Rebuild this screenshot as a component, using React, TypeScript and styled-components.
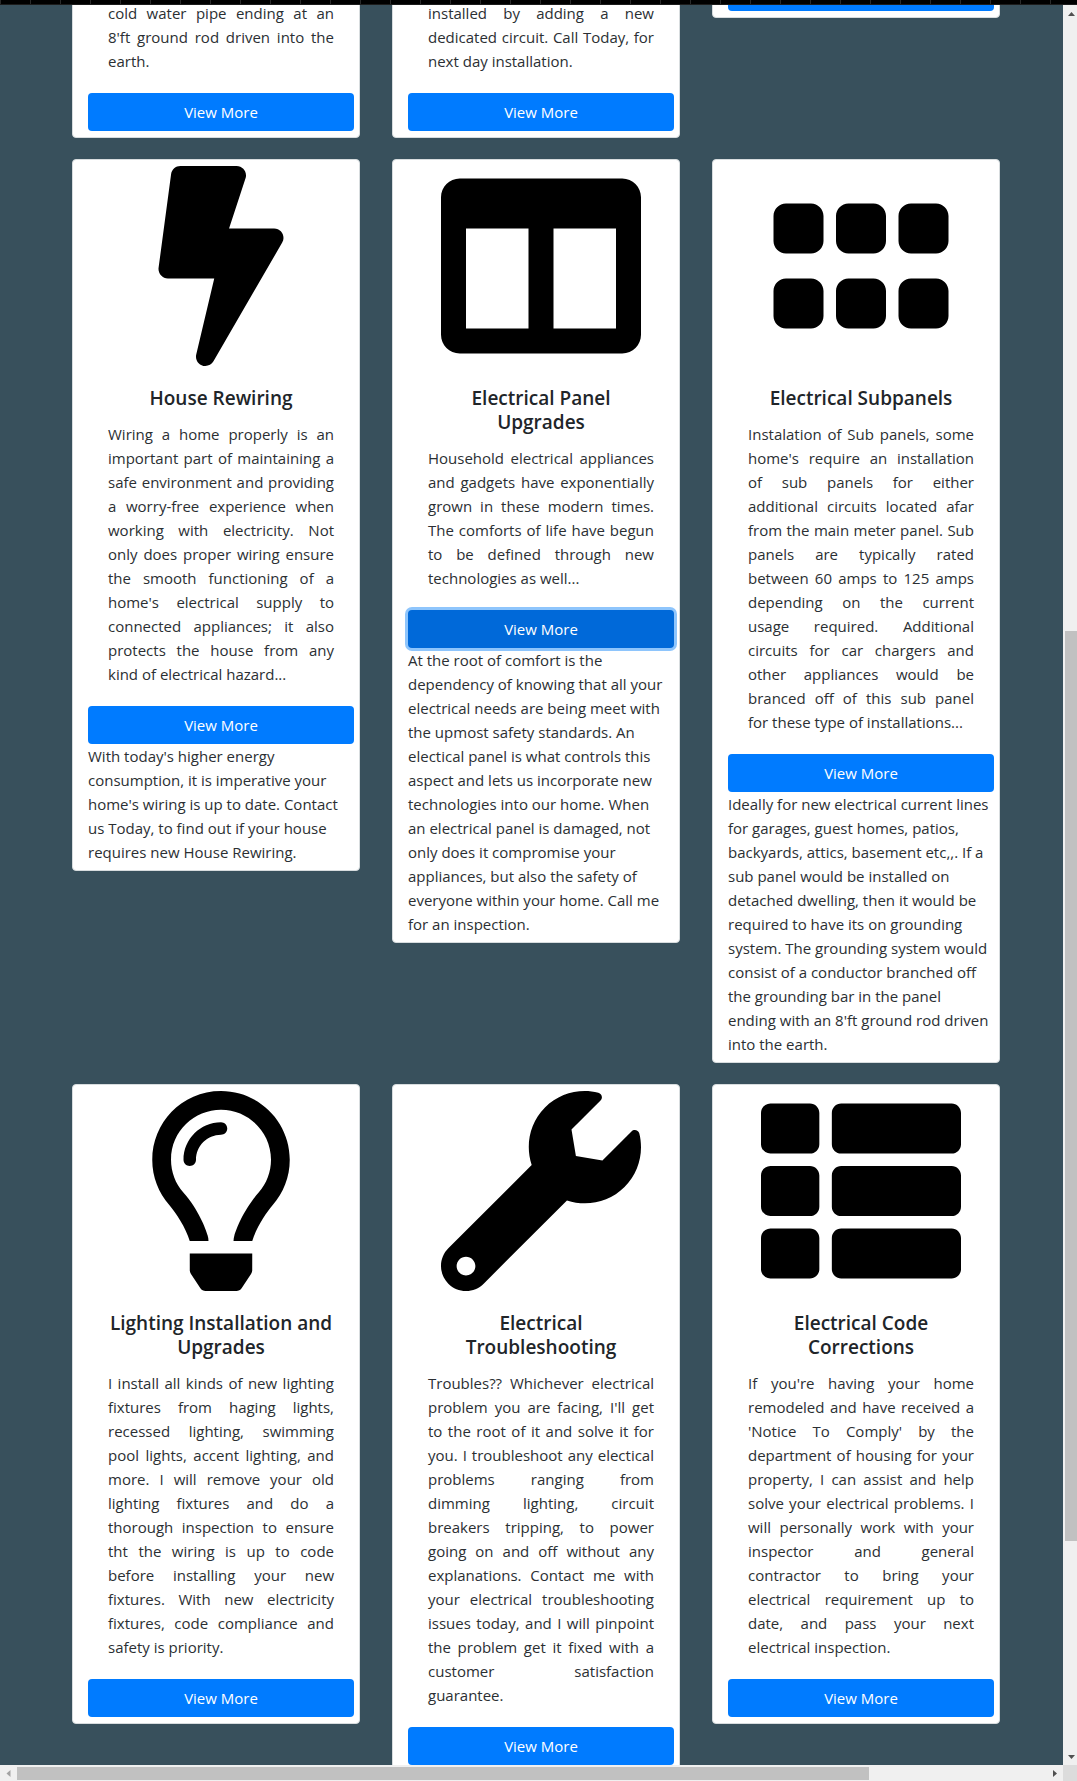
import React from "react";
import styled, { createGlobalStyle, css } from "styled-components";
import type { IconType } from "react-icons";
import {
  FaBolt,
  FaColumns,
  FaGripHorizontal,
  FaRegLightbulb,
  FaThList,
  FaWrench,
} from "react-icons/fa";

const GlobalStyle = createGlobalStyle`
  *, *::before, *::after { box-sizing: border-box; }
  body {
    margin: 0;
    font-family: "Open Sans", "Noto Sans", sans-serif;
    font-size: 15px;
    line-height: 24px;
    color: #2b2f33;
    background: #38505c;
  }
`;

const Shell = styled.div`
  display: grid;
  grid-template-columns: minmax(0, 1fr) 14px;
  grid-template-rows: 5px minmax(0, 1fr) 16px;
  height: 100vh;
`;

const TopStrip = styled.div`
  grid-column: 1 / -1;
  border-bottom: 1px solid #1c1c1c;
  background: repeating-linear-gradient(to right, #2a2a2a 0 1px, #000 1px 30px);
`;

const Viewport = styled.main`
  overflow: hidden;
  background: #38505c;
`;

const Services = styled.section`
  display: flex;
  flex-direction: column;
  gap: 21px;
  margin-top: -31px;
  padding: 0 63px 0 72px;
`;

const Row = styled.div`
  display: grid;
  grid-template-columns: repeat(3, minmax(0, 1fr));
  align-items: start;
  gap: 32px;
`;

const Card = styled.article<{ $cutOff?: boolean }>`
  display: flex;
  flex-direction: column;
  justify-content: flex-end;
  padding: 6px 5px 6px 15px;
  border: 1px solid #d7dcde;
  border-radius: 4px;
  background: #fff;
  ${(p) => p.$cutOff && css`height: 44px;`}
`;

const Picture = styled.div`
  display: flex;
  justify-content: center;

  svg {
    width: auto;
    height: 200px;
    color: #000;
  }
`;

const Body = styled.div`
  padding: 20px;
`;

const Title = styled.h5`
  margin: 0 0 12px;
  color: #212529;
  font-size: 19px;
  font-weight: 600;
  line-height: 24px;
  text-align: center;
`;

const Text = styled.p`
  margin: 0;
  text-align: justify;
`;

const Details = styled.div``;

const Button = styled.button<{ $focused?: boolean }>`
  flex: none;
  width: 100%;
  height: 38px;
  padding: 0 12px;
  border: 0;
  border-radius: 4px;
  color: #fff;
  background: #007bff;
  font: inherit;
  font-weight: 500;
  cursor: pointer;
  ${(p) =>
    p.$focused &&
    css`
      background: #0069d9;
      box-shadow: 0 0 0 3px #8ec5fc;
    `}
`;

const VerticalBar = styled.div`
  display: flex;
  flex-direction: column;
  padding-left: 2px;
  background: #f0f0f0;
`;

const HorizontalBar = styled.div`
  display: flex;
  padding: 2px 0 1px;
  background: #f0f0f0;
`;

const Corner = styled.div`
  background: #dcdcdc;
`;

const Arrow = styled.span<{ $dim?: boolean }>`
  display: flex;
  flex: 0 0 17px;
  align-items: center;
  justify-content: center;
  color: ${(p) => (p.$dim ? "#a3a3a3" : "#505050")};
`;

const Track = styled.span<{ $share: number; $thumb?: boolean }>`
  flex: ${(p) => p.$share} 1 0;
  background: ${(p) => (p.$thumb ? "#c1c1c1" : "transparent")};
`;

const arrows = {
  up: "M0 6 L3.500 2 L7 6Z",
  down: "M0 2 L3.500 6 L7 2Z",
  left: "M5.500 0 L1.500 3.500 L5.500 7Z",
  right: "M2 0 L6 3.500 L2 7Z",
};

function ScrollArrow({ to, dim }: { to: keyof typeof arrows; dim?: boolean }) {
  return (
    <Arrow $dim={dim}>
      <svg width="7" height="7" viewBox="0 0 7 7" aria-hidden="true">
        <path d={arrows[to]} fill="currentColor" />
      </svg>
    </Arrow>
  );
}

interface Service {
  icon?: IconType;
  title?: string;
  text?: string;
  details?: string;
  focused?: boolean;
  cutOff?: boolean;
}

const rows: Service[][] = [
  [
    { text: "cold water pipe ending at an 8'ft\u00a0ground rod driven into the earth." },
    { text: "installed by adding a new dedicated circuit. Call Today, for next day installation." },
    { cutOff: true },
  ],
  [
    {
      icon: FaBolt,
      title: "House Rewiring",
      text: "Wiring a home properly is an important part of maintaining a safe environment and providing a worry-free experience when working with electricity. Not only does proper wiring ensure the smooth functioning of a home's electrical supply to connected appliances; it also protects the house from any kind of electrical hazard...",
      details:
        "With today's higher energy consumption, it is imperative your home's wiring is up to date. Contact us Today, to find out if your house requires new House Rewiring.",
    },
    {
      icon: FaColumns,
      title: "Electrical Panel Upgrades",
      text: "Household electrical appliances and gadgets have exponentially grown in these modern times. The comforts of life have begun to be defined through new technologies as well...",
      details:
        "At the root of comfort is the dependency of knowing that all your electrical needs are being meet with the upmost safety standards. An electical panel is what controls this aspect and lets us incorporate new technologies into our home. When an\u00a0electrical panel is damaged, not only\u00a0does it compromise your appliances, but also the safety of everyone within your home. Call me for\u00a0an\u00a0inspection.",
      focused: true,
    },
    {
      icon: FaGripHorizontal,
      title: "Electrical Subpanels",
      text: "Instalation of Sub panels, some home's require an installation of sub panels for either additional circuits located afar from the main meter panel. Sub panels are typically rated between 60 amps to 125 amps depending on the current usage\u00a0required. Additional circuits for car chargers and other\u00a0appliances would be branced off of this sub panel for\u00a0these type of installations...",
      details:
        "Ideally for new electrical current lines for garages, guest homes, patios, backyards, attics, basement etc,,. If a sub panel would be installed on detached dwelling, then it would be required to have its on grounding system. The grounding system would consist of a conductor branched off the grounding bar in the panel ending\u00a0with an 8'ft ground rod driven into the earth.",
    },
  ],
  [
    {
      icon: FaRegLightbulb,
      title: "Lighting Installation and Upgrades",
      text: "I install all kinds of new lighting fixtures from haging lights, recessed lighting, swimming pool lights, accent lighting, and more. I will remove your old lighting fixtures and do a thorough inspection to ensure tht the wiring is up to code before installing your new fixtures. With new electricity fixtures, code compliance and safety is priority.",
    },
    {
      icon: FaWrench,
      title: "Electrical Troubleshooting",
      text: "Troubles?? Whichever electrical problem you are facing, I'll get to the root of it and solve it for you. I troubleshoot any electical problems ranging from dimming lighting, circuit breakers tripping, to power going on and off without any explanations. Contact me with your electrical troubleshooting issues today, and I will pinpoint the problem get it fixed with a customer satisfaction guarantee.",
    },
    {
      icon: FaThList,
      title: "Electrical Code Corrections",
      text: "If you're having your home remodeled and have received a 'Notice To Comply' by the department of housing for your property, I can assist and help solve your electrical problems. I will personally work with your inspector and general contractor to bring your electrical requirement up to date, and pass your next electrical inspection.",
    },
  ],
];

function ServiceCard({ icon: Icon, title, text, details, focused, cutOff }: Service) {
  return (
    <Card $cutOff={cutOff}>
      {Icon && (
        <Picture>
          <Icon aria-hidden="true" />
        </Picture>
      )}
      {text && (
        <Body>
          {title && <Title>{title}</Title>}
          <Text>{text}</Text>
        </Body>
      )}
      {cutOff ? (
        <Button type="button" aria-label="View More" />
      ) : (
        <Button type="button" $focused={focused}>
          View More
        </Button>
      )}
      {details && <Details>{details}</Details>}
    </Card>
  );
}

export default function App() {
  return (
    <>
      <GlobalStyle />
      <Shell>
        <TopStrip />
        <Viewport>
          <Services>
            {rows.map((row, r) => (
              <Row key={r}>
                {row.map((service, i) => (
                  <ServiceCard key={i} {...service} />
                ))}
              </Row>
            ))}
          </Services>
        </Viewport>
        <VerticalBar>
          <ScrollArrow to="up" />
          <Track $share={609} />
          <Track $share={910} $thumb />
          <Track $share={207} />
          <ScrollArrow to="down" />
        </VerticalBar>
        <HorizontalBar>
          <ScrollArrow to="left" dim />
          <Track $share={852} $thumb />
          <Track $share={177} />
          <ScrollArrow to="right" />
        </HorizontalBar>
        <Corner />
      </Shell>
    </>
  );
}
